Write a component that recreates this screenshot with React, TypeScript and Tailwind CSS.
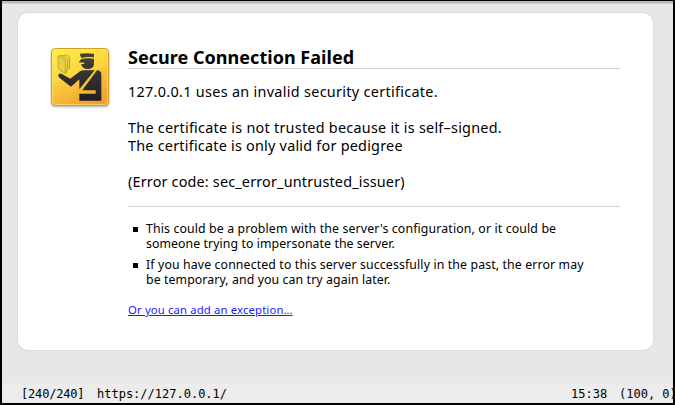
const sans = "font-['Noto_Sans','Open_Sans',sans-serif]";
const mono = "font-['DejaVu_Sans_Mono',monospace]";

function CustomsOfficer() {
  return (
    <svg width="64" height="64" viewBox="0 0 64 64" className="block shrink-0" aria-hidden="true">
      <defs>
        <linearGradient id="plate" x1="0.2" y1="0" x2="0.65" y2="1">
          <stop offset="0" stopColor="#ffed49" />
          <stop offset="0.5" stopColor="#fbcb3c" />
          <stop offset="1" stopColor="#f1a034" />
        </linearGradient>
        <linearGradient id="ink" gradientUnits="userSpaceOnUse" x1="0" y1="45" x2="0" y2="188">
          <stop offset="0" stopColor="#45433a" />
          <stop offset="1" stopColor="#211d22" />
        </linearGradient>
        <filter id="soft" x="-10%" y="-10%" width="120%" height="120%">
          <feGaussianBlur stdDeviation="0.8" />
        </filter>
      </defs>
      <rect x="3.2" y="4.5" width="58" height="57.5" rx="4" fill="#777" opacity="0.6" filter="url(#soft)" />
      <rect x="3.5" y="3.5" width="57" height="57" rx="4" fill="url(#plate)" stroke="#d79b22" />
      <rect x="4.5" y="4.5" width="55" height="55" rx="3" fill="none" stroke="#ffe676" strokeOpacity="0.65" />
      <path d="M5 5 H59.5 V22 C42 23 20 30 5 40 Z" fill="#fff33f" opacity="0.22" />
      <g transform="scale(0.33333) translate(-24 -21)">
        <g fill="url(#ink)">
          <path d="M119 47 Q140 44 162 47 V58 Q142 56 124 60 Z" />
          <path d="M124 63 Q142 59 162 62 V77 C162 87 154 93 143 93 C133 93 125 88 124 78 H131 L134 74 L116 73 Z" />
          <path d="M120 100 Q125 97 132 97 H164 L118 154 V124 L93 146 L58 119 Q52 113 57 108 Q61 105 67 109 L91 122 Z" />
          <path d="M171 97 Q184 98 184 109 V188 H118 V167 H167 V157 H127 Z" />
        </g>
        <g stroke="#b7a12c" strokeWidth="2.5" strokeLinejoin="round">
          <path d="M54 54 L80 51 L89 57 V92 L80 94 V104 L74 107 L55 92 Z" fill="#d8c23a" fillOpacity="0.55" />
          <path d="M56 55 L76 69 V106 M65 53 L83 66 V94" fill="none" />
        </g>
      </g>
    </svg>
  );
}

export default function App() {
  return (
    <div className="flex h-[405px] w-[675px] flex-col overflow-hidden border-x-2 border-t border-b-2 border-black bg-[#e7e7e7] text-black">
      <div className="h-[3px] shrink-0 border-b border-[#d5d2d5] bg-[#bdb8bd]" />
      <main className={`mt-[9px] ml-4 flex h-[337px] w-[635px] shrink-0 rounded-[10px] bg-white pt-8 pl-[30px] shadow-[0_0_0_1px_#dedede] ${sans}`}>
        <CustomsOfficer />
        <section className="ml-4 w-[492px] whitespace-nowrap">
          <h1 className="h-6 border-b border-[#d4d4d4] text-[18px] leading-[25px] font-bold tracking-[0.03px]">Secure Connection Failed</h1>
          <div className="mt-[14px] text-[14.4px] leading-[18px]">
            <p className="tracking-[0.31px]">127.0.0.1 uses an invalid security certificate.</p>
            <p className="mt-[18px] tracking-[0.25px]">The certificate is not trusted because it is self–signed.</p>
            <p className="tracking-[0.23px]">The certificate is only valid for pedigree</p>
            <p className="mt-[18px] tracking-[0.18px]">(Error code: sec_error_untrusted_issuer)</p>
          </div>
          <hr className="mt-[15px] border-[#d4d4d4]" />
          <ul className="mt-[14px] text-[12.3px] leading-[15px]">
            <li className="flex gap-2 pl-[5px]">
              <i className="mt-[6px] size-[5px] bg-black" />
              <div>
                <p className="tracking-[0.14px]">This could be a problem with the server's configuration, or it could be</p>
                <p className="tracking-[0.08px]">someone trying to impersonate the server.</p>
              </div>
            </li>
            <li className="mt-[6px] flex gap-2 pl-[5px]">
              <i className="mt-[6px] size-[5px] bg-black" />
              <div>
                <p className="tracking-[0.13px]">If you have connected to this server successfully in the past, the error may</p>
                <p className="tracking-[0.1px]">be temporary, and you can try again later.</p>
              </div>
            </li>
          </ul>
          <a href="#" className="mt-[16px] block text-[11.3px] leading-[14px] tracking-[0.15px] text-[#1a1aff] underline">Or you can add an exception…</a>
        </section>
      </main>
      <footer className={`mt-auto flex h-5 shrink-0 items-center bg-[#ececec] pt-[3px] pl-[19px] text-[12px] leading-[15px] whitespace-pre ${mono}`}>
        <span className="w-[76px] shrink-0 tracking-[-0.18px]">[240/240]</span>
        <span className="w-[474px] shrink-0">https://127.0.0.1/</span>
        <span className="w-[48px] shrink-0">15:38</span>
        <span>(100, 0)</span>
      </footer>
    </div>
  );
}
